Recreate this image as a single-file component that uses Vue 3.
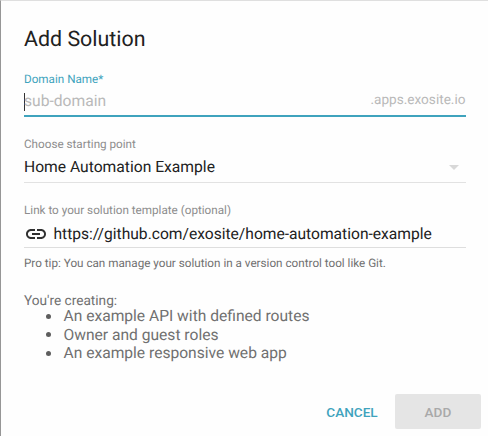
<script setup>
const items = [
  'An example API with defined routes',
  'Owner and guest roles',
  'An example responsive web app',
]
</script>

<template>
  <main class="dialog">
    <h1>Add Solution</h1>
    <section class="field domain">
      <label>Domain Name*</label>
      <div class="control">
        <i class="caret"></i><span class="placeholder">sub-domain</span>
        <span class="suffix">.apps.exosite.io</span>
      </div>
    </section>
    <section class="field start">
      <label>Choose starting point</label>
      <div class="control">
        <span class="value">Home Automation Example</span>
        <svg class="arrow" width="10" height="5" viewBox="0 0 10 5"><path d="M0 0h10L5 5z" fill="#d8d8d8" /></svg>
      </div>
    </section>
    <section class="field link">
      <label>Link to your solution template (optional)</label>
      <div class="control">
        <svg class="chain" width="24" height="24" viewBox="0 0 24 24">
          <path fill="#303030" d="M3.9 12c0-1.71 1.39-3.1 3.1-3.1h4V7H7c-2.76 0-5 2.24-5 5s2.24 5 5 5h4v-1.9H7c-1.71 0-3.1-1.39-3.1-3.1zM8 13h8v-2H8v2zm9-6h-4v1.9h4c1.71 0 3.1 1.39 3.1 3.1s-1.39 3.1-3.1 3.1h-4V17h4c2.76 0 5-2.24 5-5s-2.24-5-5-5z" />
        </svg>
        <span class="value url">https://github.com/exosite/home-automation-example</span>
      </div>
    </section>
    <p class="tip">Pro tip: You can manage your solution in a version control tool like Git.</p>
    <p class="creating">You're creating:</p>
    <ul>
      <li v-for="item in items" :key="item">{{ item }}</li>
    </ul>
    <footer>
      <button class="cancel">CANCEL</button>
      <button class="add" disabled>ADD</button>
    </footer>
  </main>
</template>

<style>
body { background: #fff; overflow: hidden; }
</style>

<style scoped>
.dialog {
  box-sizing: border-box;
  width: 488px;
  height: 436px;
  padding: 25px 22.5px 0 23px;
  border-left: 1px solid #969696;
  border-top: 1px solid #dfdfdf;
  background: #fefefe;
  font-family: Roboto, sans-serif;
  color: #707070;
  white-space: nowrap;
  text-rendering: geometricPrecision;
}
h1 {
  margin: 0;
  height: 46px;
  font-size: 21.4px;
  font-weight: 400;
  line-height: 28px;
  color: #212121;
}
.field { box-sizing: border-box; display: flex; flex-direction: column; }
.field label { font-size: 11.7px; line-height: 14px; height: 14px; color: #8d8d8d; }
.control { display: flex; align-items: center; font-size: 15.65px; line-height: 20px; }
.domain { height: 66px; }
.domain label { color: #3fa3bd; }
.domain .control { height: 29px; border-bottom: 2px solid #3fa3bd; }
.caret { width: 1px; height: 18px; background: #333; margin: 3px -1px 0 0; }
.placeholder { color: #b9b9b9; padding-top: 1px; }
.suffix { margin-left: auto; padding-bottom: 2px; font-size: 13.6px; color: #b9b9b9; }
.start { height: 65px; }
.start label { line-height: 12px; }
.start .control { height: 30px; border-bottom: 1px solid #e2e2e2; }
.arrow { margin: 1px 7px 0 auto; }
.value { color: #212121; }
.link { height: 53px; }
.link .control { box-sizing: border-box; height: 31px; padding-top: 3px; border-bottom: 1px solid #dedede; }
.chain { margin-right: 5.5px; }
.url { font-size: 15.6px; }
.tip { margin: 0; font-size: 11.7px; line-height: 14px; height: 37px; }
.creating { margin: 0; font-size: 13.65px; line-height: 16px; height: 14px; }
ul { margin: 0; padding: 0 0 0 22px; height: 87px; font-size: 15.6px; line-height: 18.6px; list-style: none; }
li { display: flex; align-items: center; }
li::before {
  content: '';
  width: 5px;
  height: 5px;
  margin: 0 12.5px 0 0;
  border-radius: 50%;
  background: #5e5e5e;
}
footer { display: flex; justify-content: flex-end; margin-right: -15.5px; }
button {
  box-sizing: border-box;
  height: 35px;
  padding: 0;
  border: 0;
  border-radius: 2px;
  font: 500 13.6px Roboto, sans-serif;
}
.cancel { width: 86px; padding-top: 1px; background: transparent; color: #3fa3bd; }
.add { width: 86px; background: #e5e5e5; color: #a9a9a9; }
</style>
